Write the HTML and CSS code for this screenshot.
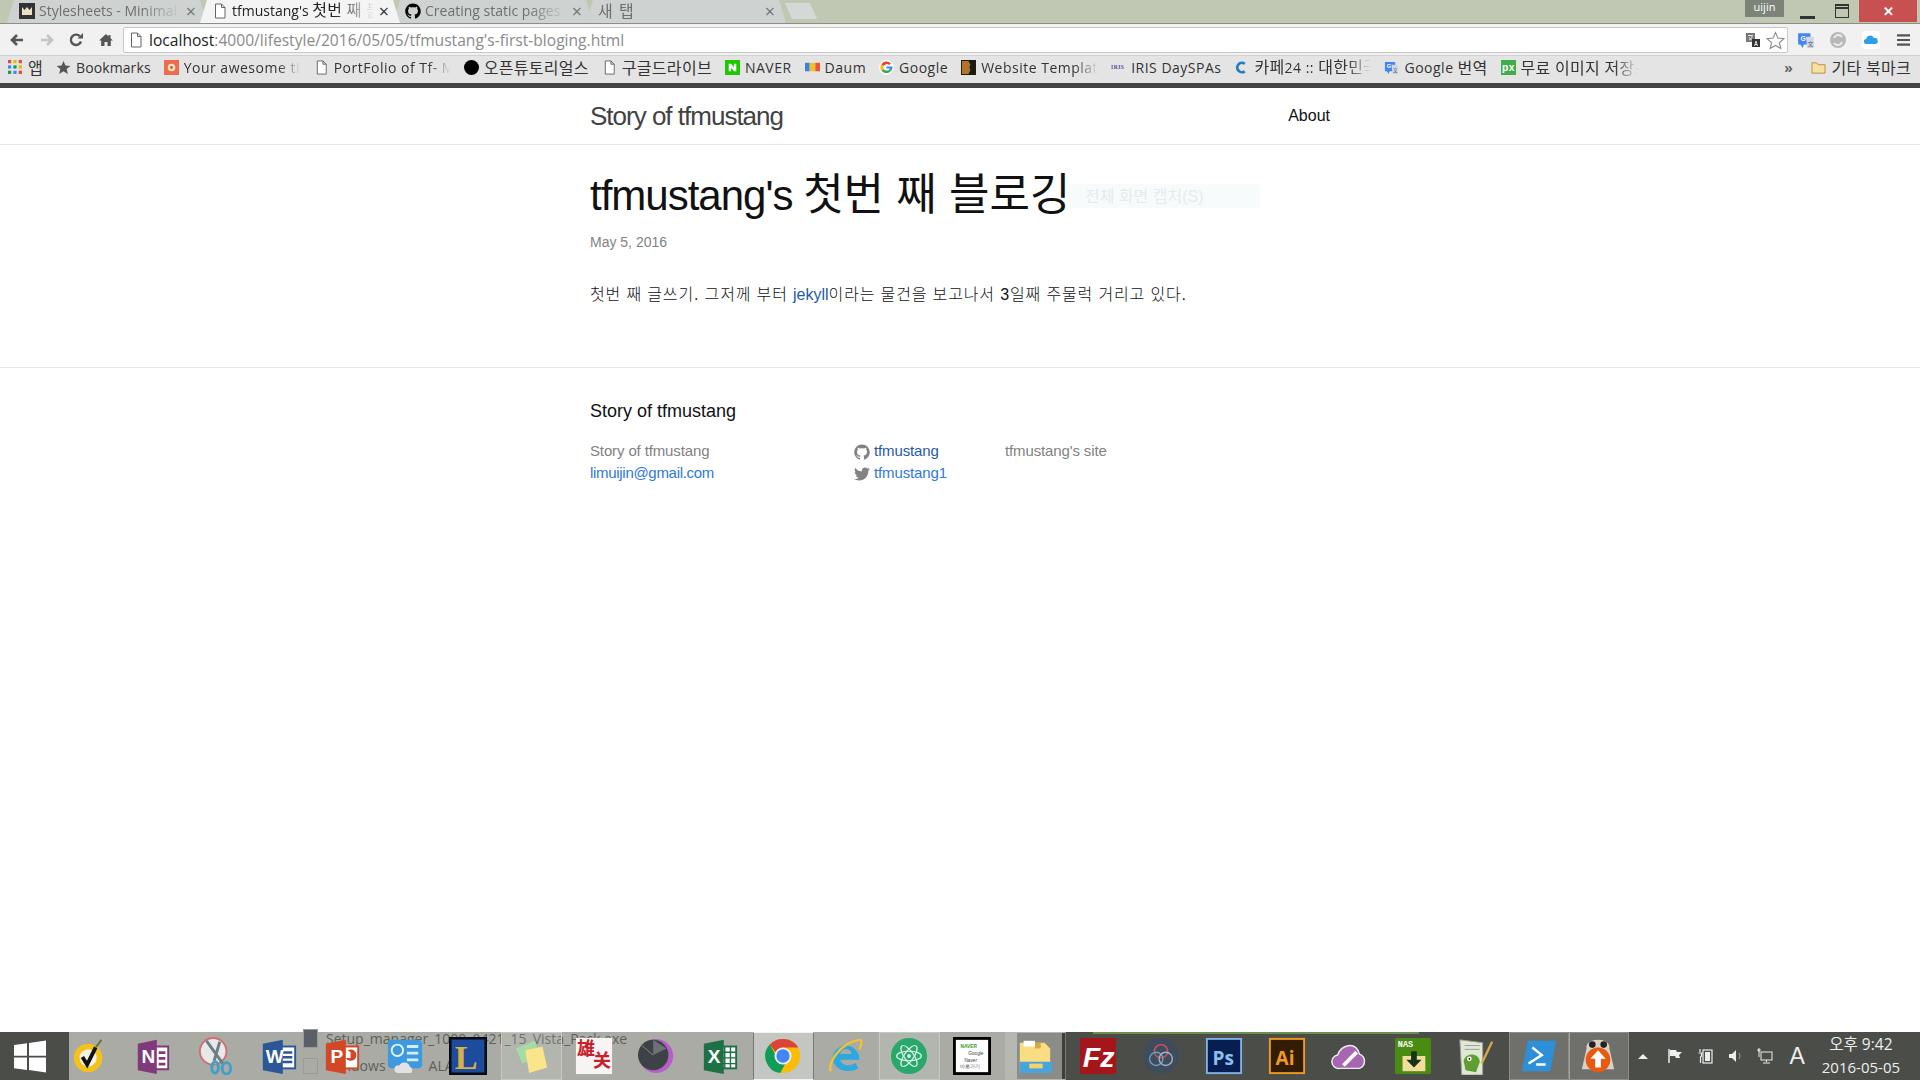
FILE: index.html
```html
<!DOCTYPE html>
<html lang="ko">
<head>
    <meta charset="UTF-8">
    <title>tfmustang's 첫번 째 블로깅</title>
    <link rel="stylesheet" href="styles.css">
</head>
<body>
    <svg class="defs" width="0" height="0">
        <symbol id="page" viewBox="0 0 14 16"><path d="M2.5 1h6l3.5 3.5V15h-9.500z M8.500 1v3.500H12" fill="#fff" stroke="#666" stroke-width="1"/></symbol>
        <symbol id="github" viewBox="0 0 16 16"><path d="M7.999,0.431c-4.285,0-7.76,3.474-7.76,7.761 c0,3.428,2.223,6.337,5.307,7.363c0.388,0.071,0.53-0.168,0.53-0.374c0-0.184-0.007-0.672-0.01-1.32 c-2.159,0.469-2.614-1.04-2.614-1.04c-0.353-0.896-0.862-1.135-0.862-1.135c-0.705-0.481,0.053-0.472,0.053-0.472 c0.779,0.055,1.189,0.8,1.189,0.8c0.692,1.186,1.816,0.843,2.258,0.645c0.071-0.502,0.271-0.843,0.493-1.037 C4.86,11.425,3.049,10.76,3.049,7.786c0-0.847,0.302-1.54,0.799-2.082C3.768,5.507,3.501,4.718,3.924,3.65 c0,0,0.652-0.209,2.134,0.796C6.677,4.273,7.34,4.187,8,4.184c0.659,0.003,1.323,0.089,1.943,0.261 c1.482-1.004,2.132-0.796,2.132-0.796c0.423,1.068,0.157,1.857,0.077,2.054c0.497,0.542,0.798,1.235,0.798,2.082 c0,2.981-1.814,3.637-3.543,3.829c0.279,0.24,0.527,0.713,0.527,1.437c0,1.037-0.01,1.874-0.01,2.129 c0,0.208,0.14,0.449,0.534,0.373c3.081-1.028,5.302-3.935,5.302-7.362C15.76,3.906,12.285,0.431,7.999,0.431z"/></symbol>
        <symbol id="twitter" viewBox="0 0 16 16"><path d="M15.969,3.058c-0.586,0.26-1.217,0.436-1.878,0.515c0.675-0.405,1.194-1.045,1.438-1.809 c-0.632,0.375-1.332,0.647-2.076,0.793c-0.596-0.636-1.446-1.033-2.387-1.033c-1.806,0-3.27,1.464-3.27,3.27 c0,0.256,0.029,0.506,0.085,0.745C5.163,5.404,2.753,4.102,1.14,2.124C0.859,2.607,0.698,3.168,0.698,3.767 c0,1.134,0.577,2.135,1.455,2.722C1.616,6.472,1.112,6.325,0.671,6.08c0,0.014,0,0.027,0,0.041c0,1.584,1.127,2.906,2.623,3.206 C3.02,9.402,2.731,9.442,2.433,9.442c-0.211,0-0.416-0.021-0.615-0.059c0.416,1.299,1.624,2.245,3.055,2.271 c-1.119,0.877-2.529,1.4-4.061,1.4c-0.264,0-0.524-0.015-0.78-0.046c1.447,0.928,3.166,1.469,5.013,1.469 c6.015,0,9.304-4.983,9.304-9.304c0-0.142-0.003-0.283-0.009-0.423C14.976,4.29,15.531,3.714,15.969,3.058z"/></symbol>
        <symbol id="translate" viewBox="0 0 16 16"><path d="M1 2h10a1 1 0 0 1 1 1v8a1 1 0 0 1-1 1H6l-1 3-2-3H1z" fill="#4285f4"/><path d="M8 5h7v10H9z" fill="#cfd8e4"/><text x="3" y="9" class="tiny-g">G</text><text x="9.500" y="13" class="tiny-a">文</text></symbol>
    </svg>

    <!-- 탭 -->
    <div class="tabstrip">
        <div class="tab">
            <svg class="favicon" viewBox="0 0 16 16"><rect width="16" height="16" fill="#333"/><path d="M3 12V4l2.500 3L8 4l2.500 3L13 4v8z" fill="#e9e2c8"/></svg>
            <span class="tab-title">Stylesheets - Minimal</span>
            <span class="tab-close">×</span>
        </div>
        <div class="tab tab-active">
            <svg class="favicon"><use href="#page"/></svg>
            <span class="tab-title">tfmustang's <span class="ko">첫번 째 블로깅</span></span>
            <span class="tab-close">×</span>
        </div>
        <div class="tab">
            <svg class="favicon"><use href="#github"/></svg>
            <span class="tab-title">Creating static pages</span>
            <span class="tab-close">×</span>
        </div>
        <div class="tab">
            <span class="tab-title tab-title-new ko">새 탭</span>
            <span class="tab-close">×</span>
        </div>
        <div class="new-tab"></div>
        <div class="window-controls">
            <span class="user-badge">uijin</span>
            <span class="win-min"></span>
            <span class="win-max"></span>
            <span class="win-close">✕</span>
        </div>
    </div>

    <!-- 주소창 -->
    <div class="toolbar">
        <svg class="tool" viewBox="0 0 16 16"><path d="M14 8H4M8 3L3 8l5 5" fill="none" stroke="#555" stroke-width="2.600"/></svg>
        <svg class="tool" viewBox="0 0 16 16"><path d="M2 8h10M8 3l5 5-5 5" fill="none" stroke="#c4c4c4" stroke-width="2.600"/></svg>
        <svg class="tool" viewBox="0 0 16 16"><path d="M13 9.500A5.200 5.200 0 1 1 11.800 4.200" fill="none" stroke="#555" stroke-width="2.400"/><path d="M9.500 6.500H15V1z" fill="#555"/></svg>
        <svg class="tool" viewBox="0 0 16 16"><path d="M8 2L1 8.500h2.200V14h3.300v-4h3v4h3.300V8.500H15l-2.500-2.300V3h-2v1.400z" fill="#555"/></svg>
        <div class="omnibox">
            <svg class="omni-page"><use href="#page"/></svg>
            <span class="url"><b>localhost</b>:4000/lifestyle/2016/05/05/tfmustang's-first-bloging.html</span>
            <svg class="omni-icon" viewBox="0 0 16 16"><rect x="1" y="1" width="9" height="9" fill="#777"/><rect x="7" y="7" width="8" height="8" fill="#333"/><path d="M3 3.500h5M5.500 3v1M4 8c2-1 3-2 3-4M4 5c.5 1.500 2 2.500 3 3" stroke="#fff" fill="none" stroke-width=".8"/><path d="M9.500 14l1.500-5 1.500 5M10 12.500h2" stroke="#fff" fill="none" stroke-width=".8"/></svg>
            <svg class="omni-icon omni-star" viewBox="0 0 18 18"><path d="M9 1.500l2.300 5.200 5.700.6-4.300 3.700 1.300 5.600L9 13.700l-5 2.900 1.300-5.600L1 7.300l5.700-.6z" fill="#fff" stroke="#888"/></svg>
        </div>
        <svg class="ext ext-first"><use href="#translate"/></svg>
        <svg class="ext" viewBox="0 0 18 18"><circle cx="9" cy="9" r="8" fill="#b8b8b8"/><path d="M5 7a4.500 4.500 0 0 1 8-1M13 11a4.500 4.500 0 0 1-8 1" fill="none" stroke="#eee" stroke-width="1.800"/></svg>
        <svg class="ext" viewBox="0 0 18 18"><rect width="18" height="18" rx="3" fill="#fff"/><path d="M4.500 13a2.500 2.500 0 0 1-.3-5 4 4 0 0 1 7.600-1 3 3 0 0 1 1.700 6z" fill="#2d9fe8"/></svg>
        <svg class="ext ext-menu" viewBox="0 0 14 14"><path d="M0 2h14M0 7h14M0 12h14" stroke="#555" stroke-width="2.400"/></svg>
    </div>

    <!-- 북마크 -->
    <div class="bookmarks">
        <span class="bm"><svg class="bm-icon" viewBox="0 0 14 14"><rect x="0" y="0" width="3" height="3" fill="#e8453c"/><rect x="5" y="0" width="3" height="3" fill="#f4b400"/><rect x="10" y="0" width="3" height="3" fill="#e8453c"/><rect x="0" y="5" width="3" height="3" fill="#4285f4"/><rect x="5" y="5" width="3" height="3" fill="#0f9d58"/><rect x="10" y="5" width="3" height="3" fill="#f4b400"/><rect x="0" y="10" width="3" height="3" fill="#0f9d58"/><rect x="5" y="10" width="3" height="3" fill="#4285f4"/><rect x="10" y="10" width="3" height="3" fill="#e8453c"/></svg><span class="ko">앱</span></span>
        <span class="bm bm-tight"><svg class="bm-icon" viewBox="0 0 16 16"><path d="M8 1l2.100 4.800 5.200.5-3.900 3.400 1.200 5.100L8 12.100l-4.600 2.700 1.200-5.100L.7 6.300l5.200-.5z" fill="#555"/></svg>Bookmarks</span>
        <span class="bm bm-fade"><svg class="bm-icon" viewBox="0 0 16 16"><rect width="16" height="16" fill="#ee6b4d"/><circle cx="8" cy="8" r="4" fill="#fbe3c4"/><circle cx="8" cy="8" r="1.500" fill="#c9552f"/></svg><span class="bm-label">Your awesome title</span></span>
        <span class="bm bm-fade"><svg class="bm-icon"><use href="#page"/></svg><span class="bm-label">PortFolio of Tf- Mustang</span></span>
        <span class="bm"><svg class="bm-icon" viewBox="0 0 16 16"><circle cx="8" cy="8" r="8" fill="#000"/></svg><span class="ko">오픈튜토리얼스</span></span>
        <span class="bm"><svg class="bm-icon"><use href="#page"/></svg><span class="ko">구글드라이브</span></span>
        <span class="bm"><svg class="bm-icon" viewBox="0 0 16 16"><rect width="16" height="16" fill="#1ec800"/><path d="M4 12V4h2.500l3 4V4H12v8H9.500l-3-4v4z" fill="#fff"/></svg>NAVER</span>
        <span class="bm"><svg class="bm-icon" viewBox="0 0 16 16"><rect y="3" width="5" height="9" fill="#3b82dc"/><rect x="5" y="3" width="6" height="9" fill="#f2c028"/><rect x="11" y="3" width="5" height="9" fill="#e8553c"/></svg>Daum</span>
        <span class="bm"><svg class="bm-icon" viewBox="0 0 16 16"><circle cx="8" cy="8" r="8" fill="#fafafa"/><path d="M8 7h6.500a6.500 6.500 0 0 1-1.500 4.500L11 10l.5-1H8z" fill="#4285f4"/><path d="M13 11.500A6.500 6.500 0 0 1 2.600 11.500l2.300-2a3.800 3.800 0 0 0 6.100.5z" fill="#34a853"/><path d="M2.600 11.500a6.500 6.500 0 0 1 0-7l2.300 2a3.800 3.800 0 0 0 0 3z" fill="#fbbc05"/><path d="M2.600 4.500a6.500 6.500 0 0 1 10-1l-1.800 1.800a3.800 3.800 0 0 0-5.900 1.200z" fill="#ea4335"/></svg>Google</span>
        <span class="bm bm-fade"><svg class="bm-icon" viewBox="0 0 16 16"><rect width="16" height="16" fill="#1d1a14"/><path d="M1 1h7l2 4-1 3 1 3-2 4H1z" fill="#b0742c"/></svg><span class="bm-label">Website Templates</span></span>
        <span class="bm"><svg class="bm-icon" viewBox="0 0 16 16"><text x="0" y="10" class="iris-logo">IRIS</text></svg>IRIS DaySPAs</span>
        <span class="bm bm-fade"><svg class="bm-icon" viewBox="0 0 16 16"><path d="M11.500 4A5 5 0 1 0 11.500 12" fill="none" stroke="#1f7fc4" stroke-width="3"/></svg><span class="bm-label"><span class="ko">카페</span>24 :: <span class="ko">대한민국 1등</span></span></span>
        <span class="bm"><svg class="bm-icon"><use href="#translate"/></svg>Google <span class="ko bm-word">번역</span></span>
        <span class="bm bm-fade"><svg class="bm-icon" viewBox="0 0 16 16"><rect width="16" height="16" fill="#3fae49"/><text x="1" y="12" class="px-logo">px</text></svg><span class="bm-label ko">무료 이미지 저장소</span></span>
        <span class="bm-more">»</span>
        <span class="bm bm-other"><svg class="bm-icon" viewBox="0 0 16 16"><path d="M1 3h5l1.500 2H15v9H1z" fill="#f7dfa0" stroke="#b58f3c"/></svg><span class="ko">기타 북마크</span></span>
    </div>

    <!-- 블로그 -->
    <header class="site-header">
        <div class="wrapper header-row">
            <a class="site-title">Story of tfmustang</a>
            <a class="nav-link">About</a>
        </div>
    </header>

    <main class="page-content">
        <div class="wrapper">
            <div class="post-header">
                <div class="capture-ghost">전체 화면 캡처(S)</div>
                <h1 class="post-title">tfmustang's <span class="title-ko">첫번 째 블로깅</span></h1>
                <p class="post-meta">May 5, 2016</p>
            </div>
            <p class="post-body">첫번 째 글쓰기. 그저께 부터 <a class="visited">jekyll</a>이라는 물건을 보고나서 3일째 주물럭 거리고 있다.</p>
        </div>
    </main>

    <footer class="site-footer">
        <div class="wrapper">
            <h2 class="footer-heading">Story of tfmustang</h2>
            <div class="footer-cols">
                <ul class="footer-col col-1">
                    <li>Story of tfmustang</li>
                    <li><a class="link">limuijin@gmail.com</a></li>
                </ul>
                <ul class="footer-col col-2">
                    <li><svg class="social"><use href="#github"/></svg><a class="visited">tfmustang</a></li>
                    <li><svg class="social"><use href="#twitter"/></svg><a class="link">tfmustang1</a></li>
                </ul>
                <div class="footer-col col-3">tfmustang's site</div>
            </div>
        </div>
    </footer>

    <div class="spacer"></div>

    <!-- 작업 표시줄 -->
    <div class="taskbar">
        <div class="ghost-list">
            <div class="ghost-row"><span class="ghost-icon ghost-icon-dark"></span>Setup_manager_1000_0421_15_Vista_Pack.exe</div>
            <div class="ghost-row"><span class="ghost-icon"></span>Windows<span class="ghost-tail">ALA</span></div>
        </div>
        <div class="start"><svg viewBox="0 0 32 32" width="32" height="33"><path d="M0 4.500l13-1.800v12.600H0zM15 2.400L32 0v15.300H15zM0 17h13v12.500L0 27.700zM15 17h17v15l-17-2.400z" fill="#fff"/></svg></div>
        <div class="task-buttons">
            <!-- norton -->
            <div class="task"><svg viewBox="0 0 40 40"><circle cx="18" cy="22" r="15" fill="#f5c21b"/><circle cx="18" cy="22" r="9" fill="#f4f0e4"/><path d="M12 21l5 8 9-18" fill="none" stroke="#111" stroke-width="4"/><path d="M26 11l6-8" stroke="#6b6b40" stroke-width="2"/></svg></div>
            <!-- onenote -->
            <div class="task"><svg viewBox="0 0 40 40"><path d="M22 10h14v24H22z" fill="#fff" stroke="#80397b" stroke-width="2"/><path d="M26 15h7v3h-7zM26 21h7v3h-7zM26 27h7v3h-7z" fill="#80397b"/><path d="M4 7l20-4v36L4 35z" fill="#80397b"/><text x="8" y="27" class="icon-letter">N</text></svg></div>
            <!-- snipping -->
            <div class="task"><svg viewBox="0 0 40 40"><circle cx="17" cy="15" r="14" fill="#e8e8e8" stroke="#cf6f6f" stroke-width="2"/><path d="M10 4l18 25M24 5L18 25" stroke="#6e7c85" stroke-width="3"/><ellipse cx="31" cy="33" rx="4.500" ry="6" fill="none" stroke="#3fa0c8" stroke-width="3"/><ellipse cx="19" cy="32" rx="3.500" ry="6" fill="none" stroke="#3fa0c8" stroke-width="3"/></svg></div>
            <!-- word -->
            <div class="task"><svg viewBox="0 0 40 40"><rect x="20" y="10" width="17" height="23" fill="#fff" stroke="#2b5797" stroke-width="2"/><path d="M24 15h10v2.500H24zM24 20h10v2.500H24zM24 25h10v2.500H24z" fill="#2b5797"/><path d="M3 7l21-4v36L3 35z" fill="#2b5797"/><text x="6" y="27" class="icon-letter">W</text></svg></div>
            <!-- powerpoint -->
            <div class="task"><svg viewBox="0 0 40 40"><rect x="20" y="10" width="17" height="23" fill="#fff" stroke="#d24726" stroke-width="2"/><path d="M26 14a6 6 0 1 1-2 8h5v-6z" fill="#d24726"/><path d="M3 7l21-4v36L3 35z" fill="#d24726"/><text x="8" y="27" class="icon-letter">P</text></svg></div>
            <!-- control panel -->
            <div class="task"><svg viewBox="0 0 40 40"><rect x="2" y="3" width="36" height="30" rx="4" fill="#3d9ae0"/><circle cx="12" cy="14" r="6" fill="none" stroke="#e8f4fc" stroke-width="2"/><path d="M22 10h12M22 17h12M22 24h12" stroke="#d5ecfa" stroke-width="3"/><path d="M12 38a4 4 0 0 1 2-8 6 6 0 0 1 11 1 4 4 0 0 1 1 7z" fill="#e2e2e2"/></svg></div>
            <!-- league of legends -->
            <div class="task"><svg viewBox="0 0 40 40"><rect x="1" y="1" width="38" height="38" fill="#10224f" stroke="#0a0a0a" stroke-width="2"/><rect x="3" y="3" width="34" height="34" fill="#1e4c9c"/><text x="6" y="34" class="icon-lol">L</text></svg></div>
            <!-- sticky notes -->
            <div class="task task-on"><svg viewBox="0 0 40 40"><path d="M4 12L24 4l5 16-18 8z" fill="#a6dca4"/><path d="M14 14l18-4 5 22-19 6z" fill="#fbe58a"/></svg></div>
            <!-- red stamp -->
            <div class="task"><svg viewBox="0 0 40 40"><rect x="1" y="1" width="38" height="38" fill="#f8f4f4"/><text x="2" y="19" class="icon-stamp">雄</text><text x="19" y="32" class="icon-stamp">关</text></svg></div>
            <!-- sphere -->
            <div class="task"><svg viewBox="0 0 40 40"><circle cx="19" cy="20" r="18" fill="#b65fc8"/><circle cx="16" cy="19" r="16" fill="#3e4247"/><path d="M16 3v16L30 12" fill="#6c7278"/><path d="M16 19L4 9" stroke="#888" stroke-width="1"/></svg></div>
            <!-- excel -->
            <div class="task"><svg viewBox="0 0 40 40"><rect x="20" y="10" width="17" height="23" fill="#fff" stroke="#1e7145" stroke-width="2"/><path d="M25 10v23M31 10v23M20 16h17M20 22h17M20 28h17" stroke="#1e7145" stroke-width="1.500"/><path d="M3 7l21-4v36L3 35z" fill="#1e7145"/><text x="7" y="27" class="icon-letter">X</text></svg></div>
            <!-- chrome -->
            <div class="task task-on task-active"><svg viewBox="0 0 40 40"><circle cx="20" cy="20" r="18" fill="#fbbc05"/><path d="M20 2a18 18 0 0 1 16 9H20a9 9 0 0 0-8 5L6 8a18 18 0 0 1 14-6z" fill="#db4437"/><path d="M6 8l8 14a9 9 0 0 0 8 7l-5 9A18 18 0 0 1 6 8z" fill="#0f9d58"/><circle cx="20" cy="20" r="9" fill="#eee"/><circle cx="20" cy="20" r="7" fill="#4285f4"/></svg></div>
            <!-- ie -->
            <div class="task"><svg viewBox="0 0 40 40"><path d="M6 21a14 14 0 0 1 27-3c1 2 1 5 1 6H14c1 6 10 8 16 3l3 6c-9 6-27 3-27-12zM14 18h12c-1-7-11-7-12 0z" fill="#2da9e0"/><path d="M4 36C0 28 14 6 34 3c4 0 2 6 0 10" fill="none" stroke="#f2c230" stroke-width="2.500"/></svg></div>
            <!-- atom -->
            <div class="task task-on"><svg viewBox="0 0 40 40"><circle cx="20" cy="20" r="19" fill="#29a86c"/><g fill="none" stroke="#d6f3e4" stroke-width="1.300"><ellipse cx="20" cy="20" rx="5" ry="13" transform="rotate(-35 20 20)"/><ellipse cx="20" cy="20" rx="5" ry="13" transform="rotate(35 20 20)"/><ellipse cx="20" cy="20" rx="5" ry="13" transform="rotate(90 20 20)"/></g><circle cx="20" cy="20" r="2" fill="#d6f3e4"/></svg></div>
            <!-- bookmark note -->
            <div class="task"><svg viewBox="0 0 40 40"><rect width="38" height="38" x="1" y="1" fill="#fff" stroke="#000" stroke-width="4"/><text x="8" y="12" class="icon-note note-green">NAVER</text><text x="16" y="19" class="icon-note">Google</text><text x="12" y="26" class="icon-note">Naver</text><text x="7" y="33" class="icon-note">바로가기</text></svg></div>
            <!-- explorer -->
            <div class="task task-on task-half"><svg viewBox="0 0 40 40"><path d="M4 6h26l6 6v26H4z" fill="#f8dd83"/><path d="M8 4h12v6H8z" fill="#fff"/><path d="M20 6h6v6h-6z" fill="#d8a83c"/><path d="M4 26h34v12H4z" fill="#4aa3dc"/><rect x="14" y="28" width="14" height="5" fill="#f3d36a"/></svg></div>
            <!-- filezilla -->
            <div class="task"><svg viewBox="0 0 40 40"><rect x="1" y="1" width="38" height="38" fill="#a5161b"/><text x="4" y="32" class="icon-fz">Fz</text></svg></div>
            <!-- rings -->
            <div class="task"><svg viewBox="0 0 40 40"><circle cx="20" cy="20" r="19" fill="#3f4c5e"/><g fill="none" stroke-width="1.500"><circle cx="20" cy="15" r="7" stroke="#d2555d"/><circle cx="15" cy="23" r="7" stroke="#62a0c0"/><circle cx="25" cy="23" r="7" stroke="#9fb0c0"/></g></svg></div>
            <!-- photoshop -->
            <div class="task"><svg viewBox="0 0 40 40"><rect x="2" y="2" width="36" height="36" fill="#061e52" stroke="#7fb2e2" stroke-width="2"/><text x="8" y="29" class="icon-adobe ps">Ps</text></svg></div>
            <!-- illustrator -->
            <div class="task"><svg viewBox="0 0 40 40"><rect x="2" y="2" width="36" height="36" fill="#331c04" stroke="#f09a20" stroke-width="2"/><text x="8" y="29" class="icon-adobe ai">Ai</text></svg></div>
            <!-- cloud -->
            <div class="task"><svg viewBox="0 0 40 40"><path d="M9 33a7 7 0 0 1-2-14C10 8 26 4 30 18a8 8 0 0 1 0 15z" fill="#a765b2" stroke="#eee" stroke-width="1.500"/><path d="M13 30l14-14" stroke="#fff" stroke-width="4"/></svg></div>
            <!-- nas -->
            <div class="task"><svg viewBox="0 0 40 40"><rect x="1" y="1" width="38" height="38" rx="2" fill="#4a8c12"/><text x="4" y="11" class="icon-nas">NAS</text><path d="M9 20h24v16H9z" fill="#f2dd9c"/><path d="M18 15h6v9h5l-8 8-8-8h5z" fill="#17331a"/></svg></div>
            <!-- notepad++ -->
            <div class="task"><svg viewBox="0 0 40 40"><path d="M3 3l24 3v34H5z" fill="#dfe9d2" stroke="#9a9a9a"/><path d="M8 9h16M8 13h16" stroke="#9a9a9a"/><path d="M7 25c2-9 16-9 17 1l-4 11-11-2z" fill="#5e9e32"/><circle cx="13" cy="23" r="2.500" fill="#fff"/><circle cx="13" cy="23" r="1" fill="#111"/><path d="M26 28L37 5" stroke="#d4a848" stroke-width="2.500"/></svg></div>
            <!-- powershell -->
            <div class="task task-on task-dark"><svg viewBox="0 0 40 40"><path d="M8 4h30l-6 32H2z" fill="#2c8fd8"/><path d="M13 11l10 8-14 9M17 29h10" fill="none" stroke="#fff" stroke-width="2.500"/></svg></div>
            <!-- penguin -->
            <div class="task task-on task-dark"><svg viewBox="0 0 40 40"><path d="M8 12C6 0 34 0 32 12l5 22H3z" fill="#d7d2c5"/><circle cx="14" cy="8" r="3.500" fill="#222"/><circle cx="26" cy="8" r="3.500" fill="#222"/><circle cx="20" cy="24" r="13" fill="#e85a10"/><path d="M20 14l8 9h-5v9h-6v-9h-5z" fill="#fff"/></svg></div>
        </div>
        <div class="tray">
            <span class="tray-up"></span>
            <svg class="tray-icon" viewBox="0 0 16 16"><path d="M2 1v14" stroke="#eee" stroke-width="1.500"/><path d="M3 2h6l1 2h5l-3 3 1 3H9L8 8H3z" fill="#eee"/></svg>
            <svg class="tray-icon" viewBox="0 0 16 16"><rect x="6" y="2" width="9" height="13" fill="none" stroke="#eee" stroke-width="1.200"/><rect x="8" y="4" width="5" height="9" fill="#eee"/><path d="M3 1v3M1.500 5h3v3l-1 1v6" stroke="#eee" fill="none" stroke-width="1.200"/></svg>
            <svg class="tray-icon" viewBox="0 0 16 16"><path d="M2 6h3l4-4v12l-4-4H2z" fill="#eee"/><path d="M12 5a5 5 0 0 1 0 6" fill="none" stroke="#999"/></svg>
            <svg class="tray-icon" viewBox="0 0 16 16"><rect x="4" y="4" width="11" height="8" fill="none" stroke="#eee"/><path d="M9.500 12v2M6 15h7" stroke="#eee"/><path d="M2 1v8" stroke="#eee"/><circle cx="2" cy="2" r="1.200" fill="none" stroke="#eee"/></svg>
            <span class="tray-lang">A</span>
            <div class="clock"><div class="clock-time">오후 9:42</div><div class="clock-date">2016-05-05</div></div>
        </div>
    </div>
</body>
</html>
```

FILE: styles.css
```css
* {
    box-sizing: border-box;
}
html, body {
    margin: 0;
    height: 100%;
}
body {
    display: flex;
    flex-direction: column;
    height: 1080px;
    overflow: hidden;
    background: #fff;
    color: #111;
    font-family: "Liberation Sans", "Noto Sans CJK KR", sans-serif;
    font-size: 16px;
}
a {
    text-decoration: none;
}
.defs {
    position: absolute;
}
.ko {
    font-size: 16px;
    letter-spacing: 0.3px;
}

/* tabs */
.tabstrip {
    flex: 0 0 23px;
    display: flex;
    padding-left: 7px;
    background: #c0c8b4;
    border-bottom: 1px solid #8c8f88;
    font-family: "Open Sans", "Noto Sans CJK KR", sans-serif;
    font-size: 14px;
}
.tab {
    flex: 0 0 200px;
    min-width: 0;
    height: 23px;
    margin-right: -7px;
    padding: 0 10px 2px 12px;
    display: flex;
    align-items: center;
    gap: 4px;
    background: #ced3d1;
    color: #6f6f6f;
    clip-path: polygon(0 100%, 7px 0, 193px 0, 200px 100%);
}
.tab-active {
    background: #f4f4f4;
    color: #222;
    z-index: 1;
}
.favicon {
    flex: 0 0 16px;
    width: 16px;
    height: 16px;
}
.tab-title {
    flex: 1;
    min-width: 0;
    line-height: 18px;
    white-space: nowrap;
    overflow: hidden;
    -webkit-mask-image: linear-gradient(to right, #000 72%, transparent 100%);
    mask-image: linear-gradient(to right, #000 72%, transparent 100%);
}
.tab-title-new {
    letter-spacing: 1px;
}
.tab-close {
    flex: 0 0 12px;
    font-size: 18px;
    line-height: 18px;
    text-align: center;
    color: #777;
}
.tab-active .tab-close {
    color: #333;
}
.new-tab {
    flex: 0 0 32px;
    height: 16px;
    margin: 3px 0 0 6px;
    background: #d4d8d6;
    clip-path: polygon(0 0, 25px 0, 32px 100%, 7px 100%);
}
.window-controls {
    margin-left: auto;
    display: flex;
    align-items: flex-start;
    height: 22px;
}
.user-badge {
    width: 39px;
    height: 17px;
    margin-right: 16px;
    background: #7c847a;
    color: #fff;
    font-size: 11px;
    line-height: 14px;
    text-align: center;
}
.win-min {
    width: 15px;
    height: 3px;
    margin: 16px 20px 0 0;
    background: #333;
}
.win-max {
    width: 14px;
    height: 14px;
    margin: 4px 10px 0 0;
    border: 1.500px solid #333;
    border-top-width: 2px;
}
.win-max::before {
    content: "";
    display: block;
    height: 2px;
    margin-top: 1px;
    background: #333;
}
.win-close {
    width: 58px;
    height: 22px;
    margin-right: 3px;
    background: #c75050;
    color: #fff;
    font-size: 13px;
    font-weight: bold;
    line-height: 22px;
    text-align: center;
}

/* toolbar */
.toolbar {
    flex: 0 0 31px;
    display: flex;
    align-items: center;
    padding: 0 10px 0 9px;
    background: #f1f1f1;
}
.tool {
    flex: 0 0 16px;
    width: 16px;
    height: 16px;
    margin-right: 13.500px;
}
.omnibox {
    flex: 1;
    height: 26px;
    margin: 1px 0 0 -4px;
    padding: 0 2px 0 5px;
    display: flex;
    align-items: center;
    background: #fff;
    border: 1px solid #c8c8c8;
    border-radius: 2px;
    font-family: "Open Sans", sans-serif;
    font-size: 15.600px;
}
.omni-page {
    width: 14px;
    height: 16px;
    margin-right: 6px;
}
.url {
    flex: 1;
    color: #8a8a8a;
    white-space: nowrap;
}
.url b {
    color: #222;
    font-weight: normal;
}
.omni-icon {
    width: 16px;
    height: 16px;
}
.omni-star {
    width: 19px;
    height: 19px;
    margin-left: 5px;
}
.ext {
    flex: 0 0 18px;
    width: 18px;
    height: 18px;
    margin-left: 14.600px;
}
.ext-first {
    margin-left: 9px;
}
.ext-menu {
    flex-basis: 13px;
    width: 13px;
    height: 14px;
    margin-left: 17px;
}

/* bookmarks */
.bookmarks {
    flex: 0 0 28px;
    display: flex;
    align-items: center;
    gap: 13px;
    padding: 0 9px 4px 8px;
    background: #e4e4e4;
    border-top: 1px solid #d0d0d0;
    color: #333;
    font-family: "Open Sans", "Noto Sans CJK KR", sans-serif;
    font-size: 14px;
    letter-spacing: 0.500px;
    line-height: 18px;
    white-space: nowrap;
}
.bm {
    display: flex;
    align-items: center;
    gap: 5px;
}
.bm-tight {
    letter-spacing: 0.100px;
}
.bm-word {
    margin-left: -1px;
}
.bm-icon {
    flex: 0 0 15px;
    width: 15px;
    height: 15px;
}
.bm-fade {
    flex: 0 0 137px;
    overflow: hidden;
}
.bm-label {
    overflow: hidden;
    -webkit-mask-image: linear-gradient(to right, #000 80%, transparent 100%);
    mask-image: linear-gradient(to right, #000 80%, transparent 100%);
}
.bm-more {
    margin-left: auto;
    color: #666;
    font-weight: bold;
}
.bm-other {
    margin-left: 5px;
}
.tiny-g {
    font: bold 6px "Liberation Sans", sans-serif;
    fill: #fff;
}
.tiny-a {
    font: 5px "Noto Sans CJK KR", sans-serif;
    fill: #555;
}
.iris-logo {
    font: bold 6px "Liberation Serif", serif;
    fill: #5b4a8c;
}
.px-logo {
    font: bold 11px "Liberation Sans", sans-serif;
    fill: #fff;
}

/* blog */
.wrapper {
    width: 800px;
    margin: 0 auto;
    padding: 0 30px;
}
.site-header {
    flex: 0 0 62px;
    border-top: 5px solid #424242;
    border-bottom: 1px solid #e8e8e8;
}
.header-row {
    display: flex;
    justify-content: space-between;
    line-height: 56px;
}
.site-title {
    color: #424242;
    font-size: 26px;
    letter-spacing: -1px;
}
.nav-link {
    color: #111;
}
.page-content {
    flex: 0 0 222px;
    padding: 30px 0;
}
.post-header {
    position: relative;
    margin-bottom: 30px;
}
.post-title {
    position: relative;
    margin: -1px 0 0;
    font-size: 42px;
    font-weight: normal;
    letter-spacing: -1px;
    line-height: 42px;
}
.title-ko {
    font-size: 44px;
    letter-spacing: 0;
}
.capture-ghost {
    position: absolute;
    left: 478px;
    top: 10px;
    width: 192px;
    height: 24px;
    padding-left: 17px;
    background: #f8fbfc;
    color: #e6eaec;
    font-size: 16px;
    line-height: 26px;
}
.post-meta {
    margin: 15px 0 0;
    color: #828282;
    font-size: 14px;
    line-height: 21px;
}
.post-body {
    margin: 0;
    font-size: 16px;
    font-weight: 300;
    letter-spacing: 0.850px;
    line-height: 24px;
}
.post-body .visited {
    letter-spacing: 0;
    font-weight: normal;
}
.visited {
    color: #1f5aa8;
}
.link {
    color: #2f78dc;
}
.site-footer {
    flex: 0 0 auto;
    padding: 30px 0;
    border-top: 1px solid #e8e8e8;
}
.footer-heading {
    margin: 0 0 15px;
    font-size: 18px;
    font-weight: normal;
    line-height: 27px;
}
.footer-cols {
    display: flex;
    color: #828282;
    font-size: 15px;
    letter-spacing: -0.130px;
    line-height: 22px;
}
.footer-col {
    margin: 0;
    padding: 0;
    list-style: none;
}
.col-1 {
    width: 264px;
}
.col-1 .link {
    letter-spacing: -0.300px;
}
.col-2 {
    width: 151px;
}
.social {
    width: 16px;
    height: 16px;
    margin-right: 4px;
    vertical-align: -4px;
    fill: #828282;
}
.spacer {
    flex: 1;
}

/* taskbar */
.taskbar {
    position: relative;
    flex: 0 0 48px;
    display: flex;
    background: linear-gradient(to right, #a9aba4 1062px, #4b4d48 1062px);
}
.taskbar::before {
    content: "";
    position: absolute;
    left: 1093px;
    top: 0;
    width: 326px;
    height: 2px;
    background: #6c8f50;
}
.ghost-list {
    position: absolute;
    left: 303px;
    top: 0;
    color: #5e605c;
    font-family: "Open Sans", sans-serif;
    font-size: 14px;
}
.ghost-row {
    display: flex;
    align-items: center;
    gap: 8px;
    height: 27px;
    margin-top: -7px;
    margin-bottom: 7px;
    white-space: nowrap;
}
.ghost-tail {
    margin-left: 35px;
}
.ghost-icon {
    width: 15px;
    height: 16px;
    border: 1px solid #999b95;
}
.ghost-icon-dark {
    height: 19px;
    background: #5a6068;
}
.start {
    position: relative;
    flex: 0 0 69px;
    display: flex;
    align-items: center;
    padding-left: 14px;
    background: #4b4d48;
}
.task-buttons {
    position: relative;
    display: flex;
    margin-left: -10.500px;
}
.task {
    flex: 0 0 63px;
    display: flex;
    align-items: center;
    justify-content: center;
}
.task svg {
    width: 38px;
    height: 38px;
}
.task-on {
    flex-basis: 61px;
    margin: 0 1px;
    background: rgba(255, 255, 255, 0.12);
    border: 1px solid #c6c8c2;
}
.task-active {
    background: rgba(255, 255, 255, 0.32);
    border-color: #f2f2f2 #777 #f2f2f2 #777;
}
.task-half {
    background: linear-gradient(to right, rgba(255, 255, 255, 0.15) 18%, rgba(0, 0, 0, 0.18) 18%);
    border-color: #b4b6b0 #777 #b4b6b0 #b4b6b0;
}
.task-dark {
    background: rgba(255, 255, 255, 0.2);
    border-color: #8b8d88;
}
.task-dark + .task-dark {
    margin-left: -3px;
}
.icon-letter {
    font: bold 20px "Liberation Sans", sans-serif;
    fill: #fff;
}
.icon-lol {
    font: bold 36px "Liberation Serif", serif;
    fill: #d8b048;
}
.icon-stamp {
    font: bold 19px "Noto Sans CJK SC", sans-serif;
    fill: #c8202a;
}
.icon-note {
    font: 5px "Liberation Sans", sans-serif;
    fill: #444;
}
.note-green {
    fill: #3a9a2a;
    font-weight: bold;
}
.icon-fz {
    font: italic bold 30px "Liberation Sans", sans-serif;
    fill: #fff;
}
.icon-adobe {
    font: bold 20px "Open Sans", sans-serif;
}
.ps {
    fill: #8cc0ea;
}
.ai {
    fill: #f09a20;
}
.icon-nas {
    font: bold 9px "Liberation Mono", monospace;
    fill: #fff;
}
.tray {
    flex: 1;
    display: flex;
    align-items: center;
    padding-left: 8px;
    color: #eee;
}
.tray-up {
    width: 0;
    height: 0;
    margin-right: 19px;
    border: 5px solid transparent;
    border-top: 0;
    border-bottom-color: #eee;
}
.tray-icon {
    flex: 0 0 16px;
    width: 16px;
    height: 16px;
    margin-right: 14px;
}
.tray-lang {
    margin-left: 3px;
    font-family: "Liberation Sans", sans-serif;
    font-size: 23px;
}
.clock {
    flex: 1;
    padding-right: 3px;
    color: #eee;
    font-family: "Open Sans", "Noto Sans CJK KR", sans-serif;
    line-height: 23px;
    text-align: center;
}
.clock-time {
    font-size: 15.500px;
}
.clock-date {
    font-size: 15px;
}
```
